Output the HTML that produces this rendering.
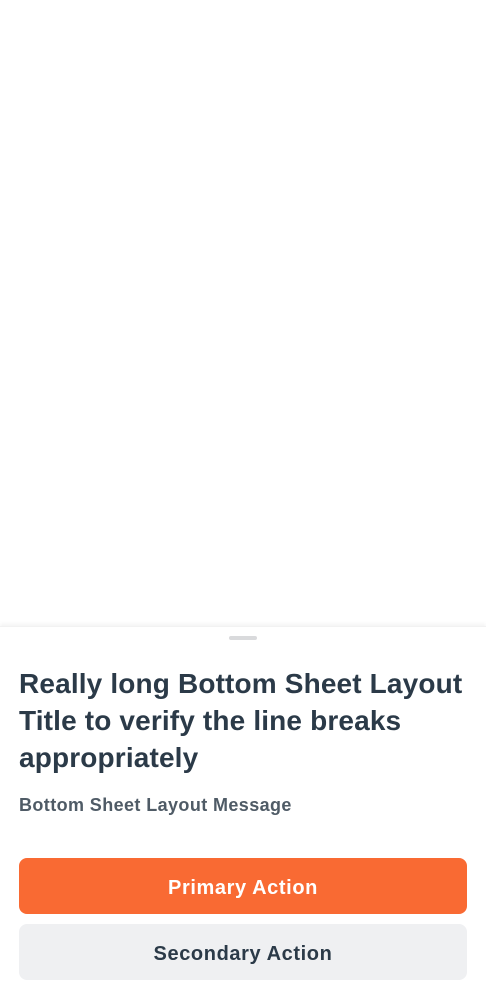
<!DOCTYPE html>
<html><head><style>
html,body{margin:0;padding:0;width:486px;height:1000px;background:#fff;overflow:hidden;font-family:"Liberation Sans",sans-serif;}
.top{position:absolute;left:0;top:0;width:486px;height:626px;background:#fff;}
.sheet{position:absolute;left:0;top:626px;width:486px;height:374px;background:#fff;box-shadow:0 -2px 4px rgba(0,0,0,0.05);border-top:1px solid #f2f2f2;}
.handle{position:absolute;left:229px;top:9px;width:28px;height:4px;border-radius:2px;background:#d9dadc;}
.title{position:absolute;left:19px;top:38px;font-size:28px;line-height:37px;font-weight:bold;color:#2b3a48;white-space:nowrap;letter-spacing:0.15px;}
.msg{position:absolute;left:19px;top:168px;font-size:18px;font-weight:bold;color:#4f5b66;letter-spacing:0.4px;}
.btn{position:absolute;left:19px;width:448px;height:56px;border-radius:8px;text-align:center;line-height:61px;font-size:20px;font-weight:bold;letter-spacing:0.6px;}
.p{top:231px;background:#f96a33;color:#fff;}
.s{top:297px;background:#eff0f2;color:#2b3a48;}
</style></head><body>
<div class="top"></div>
<div class="sheet">
<div class="handle"></div>
<div class="title">Really long Bottom Sheet Layout<br>Title to verify the line breaks<br>appropriately</div>
<div class="msg">Bottom Sheet Layout Message</div>
<div class="btn p">Primary Action</div>
<div class="btn s">Secondary Action</div>
</div>
</body></html>
